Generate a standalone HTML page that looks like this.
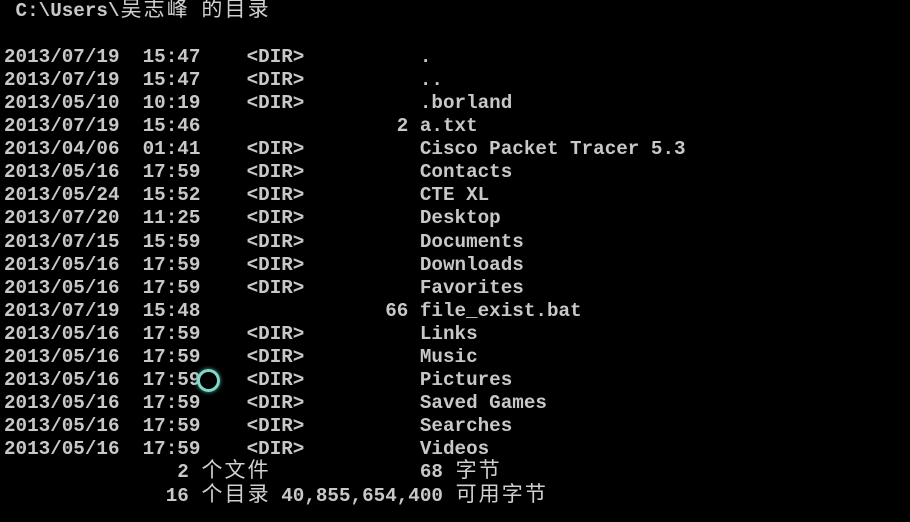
<!DOCTYPE html>
<html><head><meta charset="utf-8"><style>
html,body{margin:0;padding:0;background:#000;width:910px;height:522px;overflow:hidden}
pre{position:absolute;left:4px;top:-0.4px;margin:0;font-family:"Liberation Mono","Noto Sans CJK SC",monospace;font-weight:bold;font-size:19.25px;line-height:23.1px;color:#c8c8c8;letter-spacing:0}
.c{display:inline-block;width:23.1px;line-height:0;font-weight:normal;font-size:21px;text-align:center;font-family:"Noto Sans CJK SC","WenQuanYi Zen Hei",sans-serif;color:#d0d0d0}
.ring{position:absolute;left:197px;top:369px;width:17px;height:17px;border-radius:50%;border:3px solid #7fd8c8;box-shadow:0 0 4px #4fb0a0}
</style></head><body>
<pre> C:\Users\<span class="c">吴</span><span class="c">志</span><span class="c">峰</span> <span class="c">的</span><span class="c">目</span><span class="c">录</span>

2013/07/19  15:47    &lt;DIR&gt;          .
2013/07/19  15:47    &lt;DIR&gt;          ..
2013/05/10  10:19    &lt;DIR&gt;          .borland
2013/07/19  15:46                 2 a.txt
2013/04/06  01:41    &lt;DIR&gt;          Cisco Packet Tracer 5.3
2013/05/16  17:59    &lt;DIR&gt;          Contacts
2013/05/24  15:52    &lt;DIR&gt;          CTE XL
2013/07/20  11:25    &lt;DIR&gt;          Desktop
2013/07/15  15:59    &lt;DIR&gt;          Documents
2013/05/16  17:59    &lt;DIR&gt;          Downloads
2013/05/16  17:59    &lt;DIR&gt;          Favorites
2013/07/19  15:48                66 file_exist.bat
2013/05/16  17:59    &lt;DIR&gt;          Links
2013/05/16  17:59    &lt;DIR&gt;          Music
2013/05/16  17:59    &lt;DIR&gt;          Pictures
2013/05/16  17:59    &lt;DIR&gt;          Saved Games
2013/05/16  17:59    &lt;DIR&gt;          Searches
2013/05/16  17:59    &lt;DIR&gt;          Videos
               2 <span class="c">个</span><span class="c">文</span><span class="c">件</span>             68 <span class="c">字</span><span class="c">节</span>
              16 <span class="c">个</span><span class="c">目</span><span class="c">录</span> 40,855,654,400 <span class="c">可</span><span class="c">用</span><span class="c">字</span><span class="c">节</span></pre>
<div class="ring"></div>
</body></html>
